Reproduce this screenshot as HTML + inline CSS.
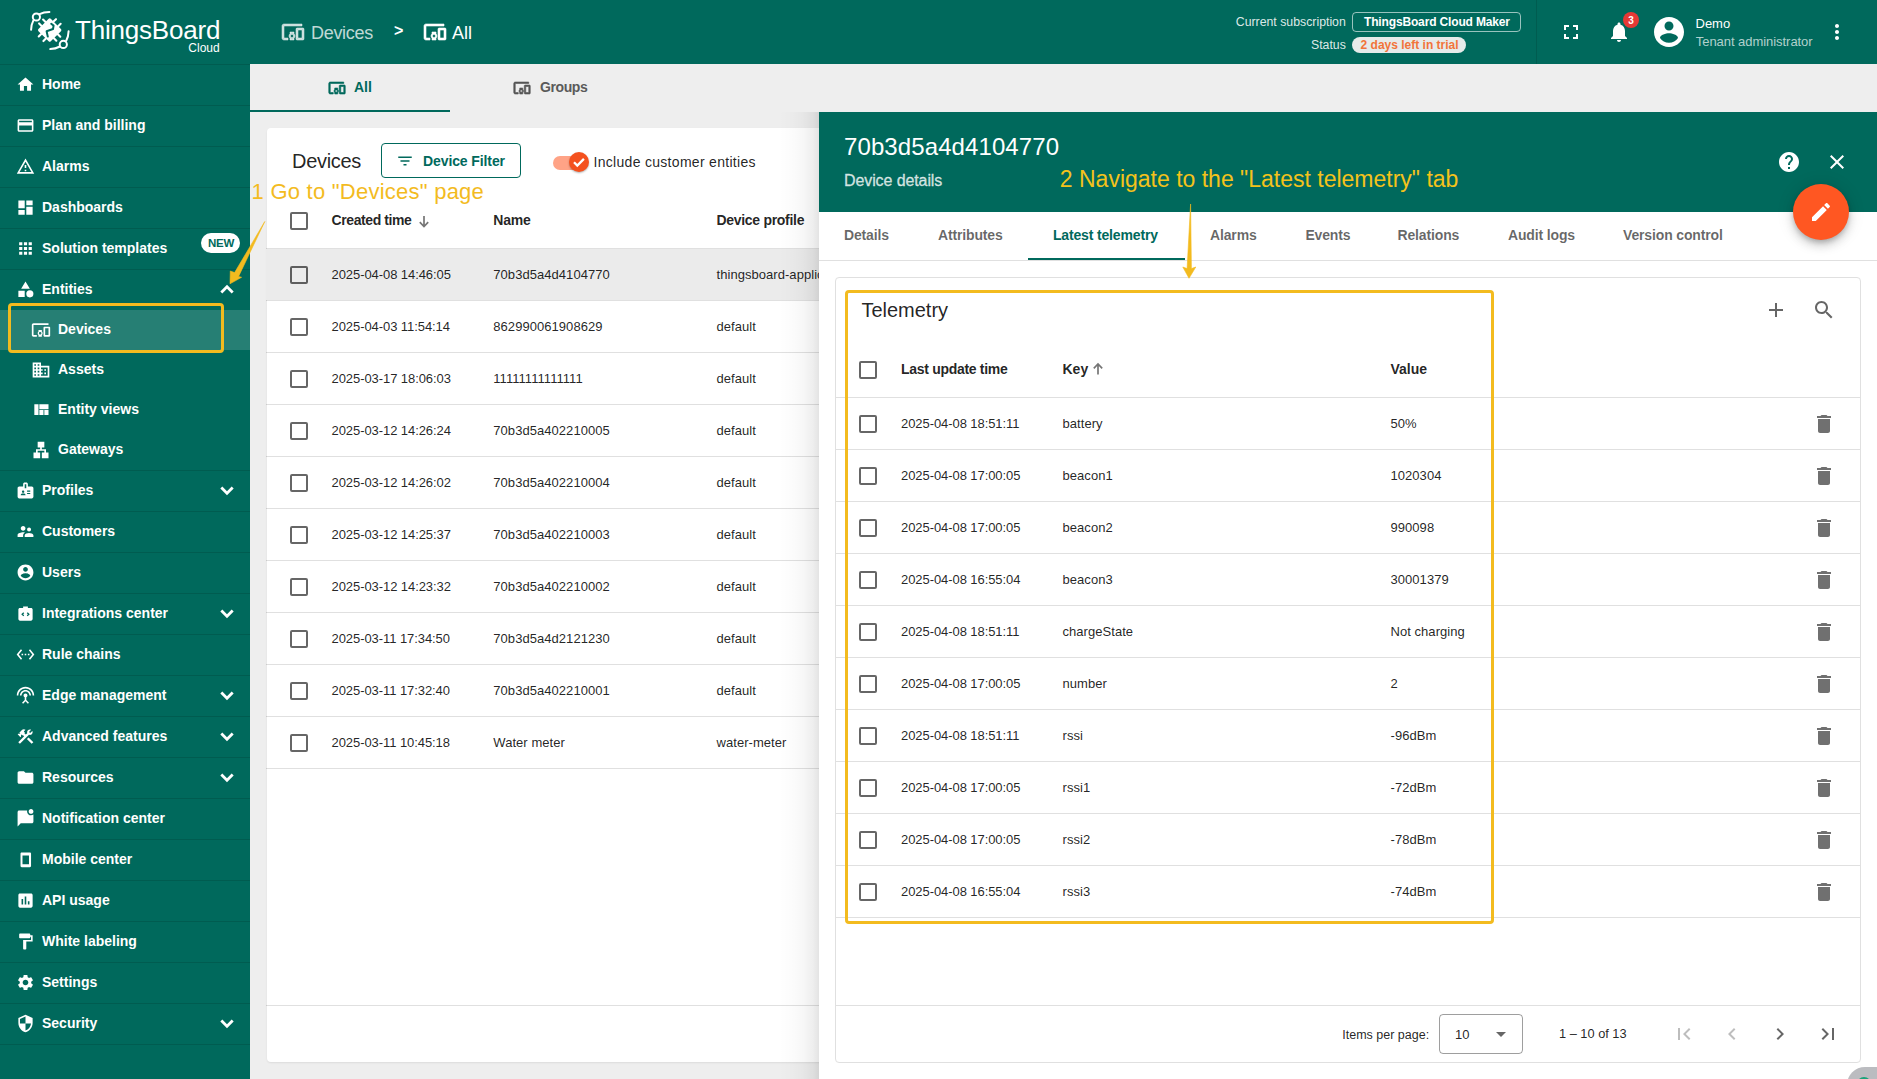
<!DOCTYPE html>
<html><head><meta charset="utf-8"><style>
html,body{margin:0;padding:0;width:1877px;height:1079px;overflow:hidden;background:#eee;font-family:"Liberation Sans",sans-serif}
.t{position:absolute;white-space:nowrap;line-height:1}
.b{position:absolute}
.i{position:absolute;overflow:visible}
</style></head><body>
<div class="b" style="left:0px;top:0px;width:1877px;height:64px;background:#00695c"></div>
<svg class="i" style="left:26px;top:8px;width:48px;height:46px" viewBox="0 0 48 46">
<g fill="none" stroke="#fff" stroke-width="2" stroke-linecap="round">
<circle cx="10.4" cy="9" r="3.6"/><circle cx="37.3" cy="36.4" r="3.6"/>
<path d="M13.6 6.2 C16.5 4.6 20 4 23.4 4"/><path d="M7.4 12.4 C5.8 15.5 5.2 18.5 5.1 21.7"/>
<path d="M40.2 32.8 C41.8 29.8 42.5 26.5 42.6 23.2"/><path d="M33.9 38.5 C30.8 40.2 27.5 41 24.3 41.1"/>
<g transform="rotate(45 23.7 22.1)">
<rect x="15" y="13.4" width="17.4" height="17.4" rx="1.5" fill="#fff" stroke="none"/>
<path d="M20.4 13.4V9.9M27 13.4V9.9M32.4 19.3H35.9M32.4 24.9H35.9M27 30.8V34.3M20.4 30.8V34.3M15 19.3H11.5M15 24.9H11.5" stroke-width="2.1"/>
</g>
</g>
<path d="M25.2 15.8 L27.6 17.6 L27 21 L20.6 23.2 L21.8 28.6" fill="none" stroke="#00695c" stroke-width="2" stroke-linejoin="round" stroke-linecap="round"/>
</svg>
<div class="t" style="left:75.0px;top:16.6px;font-size:26px;color:#fff;letter-spacing:-0.2px">ThingsBoard</div>
<div class="t" style="right:1657.3px;top:42.3px;font-size:12px;color:#fff;">Cloud</div>
<svg class="i" style="left:281px;top:20px;width:24px;height:24px;" viewBox="0 0 24 24"><path fill="rgba(255,255,255,0.75)" stroke="rgba(255,255,255,0.75)" stroke-width="0.6" d="M3 6h18V4H3c-1.1 0-2 .9-2 2v12c0 1.1.9 2 2 2h4v-2H3V6zm10 6H9v1.78c-.61.55-1 1.33-1 2.22s.39 1.67 1 2.22V20h4v-1.78c.61-.55 1-1.34 1-2.22s-.39-1.67-1-2.22V12zm-2 5.5c-.83 0-1.5-.67-1.5-1.5s.67-1.5 1.5-1.5 1.5.67 1.5 1.5-.67 1.5-1.5 1.5zM22 8h-6c-.5 0-1 .5-1 1v10c0 .5.5 1 1 1h6c.5 0 1-.5 1-1V9c0-.5-.5-1-1-1zm-1 10h-4v-8h4v8z"/></svg>
<div class="t" style="left:311.0px;top:23.5px;font-size:18px;color:rgba(255,255,255,0.75);letter-spacing:-0.3px">Devices</div>
<div class="t" style="left:394.0px;top:22.5px;font-size:16px;font-weight:700;color:#fff;">&gt;</div>
<svg class="i" style="left:423px;top:20px;width:24px;height:24px;" viewBox="0 0 24 24"><path fill="#fff" stroke="#fff" stroke-width="0.6" d="M3 6h18V4H3c-1.1 0-2 .9-2 2v12c0 1.1.9 2 2 2h4v-2H3V6zm10 6H9v1.78c-.61.55-1 1.33-1 2.22s.39 1.67 1 2.22V20h4v-1.78c.61-.55 1-1.34 1-2.22s-.39-1.67-1-2.22V12zm-2 5.5c-.83 0-1.5-.67-1.5-1.5s.67-1.5 1.5-1.5 1.5.67 1.5 1.5-.67 1.5-1.5 1.5zM22 8h-6c-.5 0-1 .5-1 1v10c0 .5.5 1 1 1h6c.5 0 1-.5 1-1V9c0-.5-.5-1-1-1zm-1 10h-4v-8h4v8z"/></svg>
<div class="t" style="left:452.0px;top:23.5px;font-size:18px;color:#fff;">All</div>
<div class="t" style="right:531.2px;top:15.9px;font-size:12.3px;color:rgba(255,255,255,0.87);">Current subscription</div>
<div class="b" style="left:1352px;top:12px;width:169px;height:20px;border:1px solid rgba(255,255,255,0.6);border-radius:4px;box-sizing:border-box"></div>
<div class="t" style="left:1364.0px;top:16.1px;font-size:12px;font-weight:700;color:#fff;letter-spacing:-0.15px">ThingsBoard Cloud Maker</div>
<div class="t" style="right:531.2px;top:38.6px;font-size:12.3px;color:rgba(255,255,255,0.87);">Status</div>
<div class="b" style="left:1352px;top:37px;width:114px;height:16px;background:#e6ebea;border-radius:8px"></div>
<div class="t" style="left:1360.6px;top:38.8px;font-size:12px;font-weight:700;color:#f2743a;">2 days left in trial</div>
<div class="b" style="left:1536px;top:0px;width:1px;height:64px;background:rgba(0,0,0,0.12)"></div>
<svg class="i" style="left:1559px;top:20px;width:24px;height:24px;" viewBox="0 0 24 24"><path fill="#fff" d="M7 14H5v5h5v-2H7v-3zm-2-4h2V7h3V5H5v5zm12 7h-3v2h5v-5h-2v3zM14 5v2h3v3h2V5h-5z"/></svg>
<svg class="i" style="left:1607px;top:20px;width:24px;height:24px;" viewBox="0 0 24 24"><path fill="#fff" d="M12 22c1.1 0 2-.9 2-2h-4c0 1.1.89 2 2 2zm6-6v-5c0-3.07-1.64-5.64-4.5-6.32V4c0-.83-.67-1.5-1.5-1.5s-1.5.67-1.5 1.5v.68C7.63 5.36 6 7.92 6 11v5l-2 2v1h16v-1l-2-2z"/></svg>
<div class="b" style="left:1623px;top:12px;width:16px;height:16px;background:#e53935;border-radius:50%"></div>
<div class="t" style="left:1631.0px;top:15.5px;font-size:10px;font-weight:700;color:#fff;width:16px;margin-left:-8px;text-align:center">3</div>
<svg class="i" style="left:1651px;top:14px;width:36px;height:36px;" viewBox="0 0 24 24"><path fill="#fff" d="M12 2C6.48 2 2 6.48 2 12s4.48 10 10 10 10-4.48 10-10S17.52 2 12 2zm0 3c1.66 0 3 1.34 3 3s-1.34 3-3 3-3-1.34-3-3 1.34-3 3-3zm0 14.2c-2.5 0-4.71-1.28-6-3.22.03-1.99 4-3.08 6-3.08 1.99 0 5.97 1.09 6 3.08-1.29 1.94-3.5 3.22-6 3.22z"/></svg>
<div class="t" style="left:1695.5px;top:16.6px;font-size:13px;color:#fff;">Demo</div>
<div class="t" style="left:1695.8px;top:35.0px;font-size:13px;color:rgba(255,255,255,0.7);letter-spacing:-0.05px">Tenant administrator</div>
<svg class="i" style="left:1825px;top:20px;width:24px;height:24px;" viewBox="0 0 24 24"><path fill="#fff" d="M12 8c1.1 0 2-.9 2-2s-.9-2-2-2-2 .9-2 2 .9 2 2 2zm0 2c-1.1 0-2 .9-2 2s.9 2 2 2 2-.9 2-2-.9-2-2-2zm0 6c-1.1 0-2 .9-2 2s.9 2 2 2 2-.9 2-2-.9-2-2-2z"/></svg>
<div class="b" style="left:0px;top:64px;width:250px;height:1015px;background:#00695c"></div>
<div class="b" style="left:0px;top:64px;width:250px;height:1px;background:rgba(0,0,0,0.12)"></div>
<svg class="i" style="left:15.7px;top:75.0px;width:19px;height:19px;" viewBox="0 0 24 24"><path fill="#fff" d="M10 20v-6h4v6h5v-8h3L12 3 2 12h3v8z"/></svg>
<div class="t" style="left:42.0px;top:77.0px;font-size:14px;font-weight:700;color:#fff;">Home</div>
<div class="b" style="left:0px;top:105px;width:250px;height:1px;background:rgba(0,0,0,0.12)"></div>
<svg class="i" style="left:15.7px;top:116.0px;width:19px;height:19px;" viewBox="0 0 24 24"><path fill="#fff" d="M20 4H4c-1.11 0-1.99.89-1.99 2L2 18c0 1.11.89 2 2 2h16c1.11 0 2-.89 2-2V6c0-1.11-.89-2-2-2zm0 14H4v-6h16v6zm0-10H4V6h16v2z"/></svg>
<div class="t" style="left:42.0px;top:118.0px;font-size:14px;font-weight:700;color:#fff;">Plan and billing</div>
<div class="b" style="left:0px;top:146px;width:250px;height:1px;background:rgba(0,0,0,0.12)"></div>
<svg class="i" style="left:15.7px;top:157.0px;width:19px;height:19px;" viewBox="0 0 24 24"><path fill="#fff" d="M12 5.99L19.53 19H4.47L12 5.99M12 2L1 21h22L12 2zm1 14h-2v2h2v-2zm0-6h-2v4h2v-4z"/></svg>
<div class="t" style="left:42.0px;top:159.0px;font-size:14px;font-weight:700;color:#fff;">Alarms</div>
<div class="b" style="left:0px;top:187px;width:250px;height:1px;background:rgba(0,0,0,0.12)"></div>
<svg class="i" style="left:15.7px;top:198.0px;width:19px;height:19px;" viewBox="0 0 24 24"><path fill="#fff" d="M3 13h8V3H3v10zm0 8h8v-6H3v6zm10 0h8V11h-8v10zm0-18v6h8V3h-8z"/></svg>
<div class="t" style="left:42.0px;top:200.0px;font-size:14px;font-weight:700;color:#fff;">Dashboards</div>
<div class="b" style="left:0px;top:228px;width:250px;height:1px;background:rgba(0,0,0,0.12)"></div>
<svg class="i" style="left:15.7px;top:239.0px;width:19px;height:19px;" viewBox="0 0 24 24"><path fill="#fff" d="M4 8h4V4H4v4zm6 12h4v-4h-4v4zm-6 0h4v-4H4v4zm0-6h4v-4H4v4zm6 0h4v-4h-4v4zm6-10v4h4V4h-4zm-6 4h4V4h-4v4zm6 6h4v-4h-4v4zm0 6h4v-4h-4v4z"/></svg>
<div class="t" style="left:42.0px;top:241.0px;font-size:14px;font-weight:700;color:#fff;">Solution templates</div>
<div class="b" style="left:201px;top:233px;width:39px;height:20px;background:#fff;border-radius:10px"></div>
<div class="t" style="left:208.0px;top:237.6px;font-size:11.5px;font-weight:700;color:#00695c;letter-spacing:-0.2px">NEW</div>
<div class="b" style="left:0px;top:269px;width:250px;height:1px;background:rgba(0,0,0,0.12)"></div>
<svg class="i" style="left:15.7px;top:280.0px;width:19px;height:19px;" viewBox="0 0 24 24"><path fill="#fff" d="M12 2l-5.5 9h11zM17.5 13a4.5 4.5 0 1 0 0 9a4.5 4.5 0 1 0 0-9zM3 13.5h8v8H3z"/></svg>
<div class="t" style="left:42.0px;top:282.0px;font-size:14px;font-weight:700;color:#fff;">Entities</div>
<svg class="i" style="left:215px;top:277.5px;width:24px;height:24px" viewBox="0 0 24 24"><path d="M7.3 13.4L12 8.7l4.7 4.7" fill="none" stroke="#fff" stroke-width="2.8" stroke-linecap="square"/></svg>
<div class="b" style="left:0px;top:310px;width:250px;height:40px;background:rgba(255,255,255,0.15)"></div>
<svg class="i" style="left:31px;top:320.0px;width:20px;height:20px;" viewBox="0 0 24 24"><path fill="#fff" d="M3 6h18V4H3c-1.1 0-2 .9-2 2v12c0 1.1.9 2 2 2h4v-2H3V6zm10 6H9v1.78c-.61.55-1 1.33-1 2.22s.39 1.67 1 2.22V20h4v-1.78c.61-.55 1-1.34 1-2.22s-.39-1.67-1-2.22V12zm-2 5.5c-.83 0-1.5-.67-1.5-1.5s.67-1.5 1.5-1.5 1.5.67 1.5 1.5-.67 1.5-1.5 1.5zM22 8h-6c-.5 0-1 .5-1 1v10c0 .5.5 1 1 1h6c.5 0 1-.5 1-1V9c0-.5-.5-1-1-1zm-1 10h-4v-8h4v8z"/></svg>
<div class="t" style="left:58.0px;top:321.7px;font-size:14px;font-weight:700;color:#fff;">Devices</div>
<svg class="i" style="left:31px;top:360.0px;width:20px;height:20px;" viewBox="0 0 24 24"><path fill="#fff" d="M12 7V3H2v18h20V7H12zM6 19H4v-2h2v2zm0-4H4v-2h2v2zm0-4H4V9h2v2zm0-4H4V5h2v2zm4 12H8v-2h2v2zm0-4H8v-2h2v2zm0-4H8V9h2v2zm0-4H8V5h2v2zm10 12h-8v-2h2v-2h-2v-2h2v-2h-2V9h8v10zm-2-8h-2v2h2v-2zm0 4h-2v2h2v-2z"/></svg>
<div class="t" style="left:58.0px;top:361.7px;font-size:14px;font-weight:700;color:#fff;">Assets</div>
<svg class="i" style="left:31px;top:400.0px;width:20px;height:20px;" viewBox="0 0 24 24"><path fill="#fff" d="M10 18h5v-6h-5v6zm-6 0h5V5H4v13zm12 0h5v-6h-5v6zM10 5v6h11V5H10z"/></svg>
<div class="t" style="left:58.0px;top:401.7px;font-size:14px;font-weight:700;color:#fff;">Entity views</div>
<svg class="i" style="left:31px;top:440.0px;width:20px;height:20px;" viewBox="0 0 24 24"><path fill="#fff" d="M13 22h8v-7h-3v-4h-5V9h3V2H8v7h3v2H6v4H3v7h8v-7H8v-2h8v2h-3z"/></svg>
<div class="t" style="left:58.0px;top:441.7px;font-size:14px;font-weight:700;color:#fff;">Gateways</div>
<div class="b" style="left:0px;top:470px;width:250px;height:1px;background:rgba(0,0,0,0.12)"></div>
<svg class="i" style="left:15.7px;top:481.0px;width:19px;height:19px;" viewBox="0 0 24 24"><path fill="#fff" d="M20 7h-5V4c0-1.1-.9-2-2-2h-2c-1.1 0-2 .9-2 2v3H4c-1.1 0-2 .9-2 2v11c0 1.1.9 2 2 2h16c1.1 0 2-.9 2-2V9c0-1.1-.9-2-2-2zM9 12c.83 0 1.5.67 1.5 1.5S9.83 15 9 15s-1.5-.67-1.5-1.5S8.17 12 9 12zm3 6H6v-.43c0-.6.36-1.15.92-1.39.64-.28 1.34-.43 2.08-.43s1.44.15 2.08.43c.55.24.92.78.92 1.39V18zm1-9h-2V4h2v5zm5 7.5h-4V15h4v1.5zm0-3h-4V12h4v1.5z"/></svg>
<div class="t" style="left:42.0px;top:483.0px;font-size:14px;font-weight:700;color:#fff;">Profiles</div>
<svg class="i" style="left:215px;top:478.5px;width:24px;height:24px" viewBox="0 0 24 24"><path d="M7.3 9.6L12 14.3l4.7-4.7" fill="none" stroke="#fff" stroke-width="2.8" stroke-linecap="square"/></svg>
<div class="b" style="left:0px;top:511px;width:250px;height:1px;background:rgba(0,0,0,0.12)"></div>
<svg class="i" style="left:15.7px;top:522.0px;width:19px;height:19px;" viewBox="0 0 24 24"><path fill="#fff" d="M16.5 12c1.38 0 2.49-1.12 2.49-2.5S17.88 7 16.5 7C15.12 7 14 8.12 14 9.5s1.12 2.5 2.5 2.5zM9 11c1.66 0 2.99-1.34 2.99-3S10.66 5 9 5C7.34 5 6 6.34 6 8s1.34 3 3 3zm7.5 3c-1.83 0-5.5.92-5.5 2.75V19h11v-2.25c0-1.83-3.67-2.75-5.5-2.75zM9 13c-2.330 0-7 1.17-7 3.5V19h7v-2.25c0-.85.33-2.34 2.37-3.47C10.5 13.1 9.66 13 9 13z"/></svg>
<div class="t" style="left:42.0px;top:524.0px;font-size:14px;font-weight:700;color:#fff;">Customers</div>
<div class="b" style="left:0px;top:552px;width:250px;height:1px;background:rgba(0,0,0,0.12)"></div>
<svg class="i" style="left:15.7px;top:563.0px;width:19px;height:19px;" viewBox="0 0 24 24"><path fill="#fff" d="M12 2C6.48 2 2 6.48 2 12s4.48 10 10 10 10-4.48 10-10S17.52 2 12 2zm0 3c1.66 0 3 1.34 3 3s-1.34 3-3 3-3-1.34-3-3 1.34-3 3-3zm0 14.2c-2.5 0-4.71-1.28-6-3.22.03-1.99 4-3.08 6-3.08 1.99 0 5.97 1.09 6 3.08-1.29 1.94-3.5 3.22-6 3.22z"/></svg>
<div class="t" style="left:42.0px;top:565.0px;font-size:14px;font-weight:700;color:#fff;">Users</div>
<div class="b" style="left:0px;top:593px;width:250px;height:1px;background:rgba(0,0,0,0.12)"></div>
<svg class="i" style="left:15.7px;top:604.0px;width:19px;height:19px;" viewBox="0 0 24 24"><path fill="#fff" d="M9 3h6v2h4c1.1 0 2 .9 2 2v12c0 1.1-.9 2-2 2H5c-1.1 0-2-.9-2-2V7c0-1.1.9-2 2-2h4V3zm1.4 8.6L9.2 10.4 6.6 13l2.6 2.6 1.2-1.2L9 13zm3.2 0L15 13l-1.4 1.4 1.2 1.2 2.6-2.6-2.6-2.6z"/></svg>
<div class="t" style="left:42.0px;top:606.0px;font-size:14px;font-weight:700;color:#fff;">Integrations center</div>
<svg class="i" style="left:215px;top:601.5px;width:24px;height:24px" viewBox="0 0 24 24"><path d="M7.3 9.6L12 14.3l4.7-4.7" fill="none" stroke="#fff" stroke-width="2.8" stroke-linecap="square"/></svg>
<div class="b" style="left:0px;top:634px;width:250px;height:1px;background:rgba(0,0,0,0.12)"></div>
<svg class="i" style="left:15.7px;top:645.0px;width:19px;height:19px;" viewBox="0 0 24 24"><path fill="#fff" d="M7.77 6.76L6.23 5.48.82 12l5.41 6.52 1.54-1.28L3.42 12l4.35-5.24zM7 13h2v-2H7v2zm10-2h-2v2h2v-2zm-6 2h2v-2h-2v2zm6.77-7.52l-1.54 1.28L20.58 12l-4.35 5.24 1.54 1.28L23.18 12l-5.41-6.52z"/></svg>
<div class="t" style="left:42.0px;top:647.0px;font-size:14px;font-weight:700;color:#fff;">Rule chains</div>
<div class="b" style="left:0px;top:675px;width:250px;height:1px;background:rgba(0,0,0,0.12)"></div>
<svg class="i" style="left:15.7px;top:686.0px;width:19px;height:19px;" viewBox="0 0 24 24"><path fill="#fff" d="M12 5c-3.87 0-7 3.13-7 7h2c0-2.76 2.24-5 5-5s5 2.24 5 5h2c0-3.87-3.13-7-7-7zm1 9.29c.88-.39 1.5-1.26 1.5-2.29 0-1.38-1.12-2.5-2.5-2.5S9.5 10.62 9.5 12c0 1.02.62 1.9 1.5 2.29v3.3L7.59 21 9 22.41l3-3 3 3L16.41 21 13 17.59v-3.3zM12 1C5.93 1 1 5.93 1 12h2c0-4.97 4.03-9 9-9s9 4.03 9 9h2c0-6.07-4.93-11-11-11z"/></svg>
<div class="t" style="left:42.0px;top:688.0px;font-size:14px;font-weight:700;color:#fff;">Edge management</div>
<svg class="i" style="left:215px;top:683.5px;width:24px;height:24px" viewBox="0 0 24 24"><path d="M7.3 9.6L12 14.3l4.7-4.7" fill="none" stroke="#fff" stroke-width="2.8" stroke-linecap="square"/></svg>
<div class="b" style="left:0px;top:716px;width:250px;height:1px;background:rgba(0,0,0,0.12)"></div>
<svg class="i" style="left:15.7px;top:727.0px;width:19px;height:19px;" viewBox="0 0 24 24"><path fill="#fff" d="M13.78 15.3L19.78 21.3L21.89 19.14L15.89 13.14L13.78 15.3M17.5 10.1C17.11 10.1 16.69 10.05 16.36 9.91L4.97 21.25L2.86 19.14L10.27 11.74L8.5 9.96L7.78 10.66L6.33 9.25V12.11L5.63 12.81L2.11 9.25L2.81 8.55H5.62L4.22 7.14L7.78 3.58C8.95 2.41 10.83 2.41 12 3.58L9.89 5.74L11.3 7.14L10.59 7.85L12.38 9.63L14.2 7.75C14.06 7.42 14 7 14 6.63C14 4.66 15.56 3.11 17.5 3.11C18.09 3.11 18.61 3.25 19.08 3.53L16.41 6.2L17.91 7.7L20.58 5.03C20.86 5.5 21 6 21 6.63C21 8.55 19.45 10.1 17.5 10.1Z"/></svg>
<div class="t" style="left:42.0px;top:729.0px;font-size:14px;font-weight:700;color:#fff;">Advanced features</div>
<svg class="i" style="left:215px;top:724.5px;width:24px;height:24px" viewBox="0 0 24 24"><path d="M7.3 9.6L12 14.3l4.7-4.7" fill="none" stroke="#fff" stroke-width="2.8" stroke-linecap="square"/></svg>
<div class="b" style="left:0px;top:757px;width:250px;height:1px;background:rgba(0,0,0,0.12)"></div>
<svg class="i" style="left:15.7px;top:768.0px;width:19px;height:19px;" viewBox="0 0 24 24"><path fill="#fff" d="M10 4H4c-1.1 0-1.99.9-1.99 2L2 18c0 1.1.9 2 2 2h16c1.1 0 2-.9 2-2V8c0-1.1-.9-2-2-2h-8l-2-2z"/></svg>
<div class="t" style="left:42.0px;top:770.0px;font-size:14px;font-weight:700;color:#fff;">Resources</div>
<svg class="i" style="left:215px;top:765.5px;width:24px;height:24px" viewBox="0 0 24 24"><path d="M7.3 9.6L12 14.3l4.7-4.7" fill="none" stroke="#fff" stroke-width="2.8" stroke-linecap="square"/></svg>
<div class="b" style="left:0px;top:798px;width:250px;height:1px;background:rgba(0,0,0,0.12)"></div>
<svg class="i" style="left:15.7px;top:809.0px;width:19px;height:19px;" viewBox="0 0 24 24"><path fill="#fff" d="M22 6.98V16c0 1.1-.9 2-2 2H6l-4 4V4c0-1.1.9-2 2-2h10.1c-.06.32-.1.66-.1 1 0 2.76 2.24 5 5 5 1.13 0 2.16-.39 3-1.02zM16 3c0 1.66 1.34 3 3 3s3-1.34 3-3-1.34-3-3-3-3 1.34-3 3z"/></svg>
<div class="t" style="left:42.0px;top:811.0px;font-size:14px;font-weight:700;color:#fff;">Notification center</div>
<div class="b" style="left:0px;top:839px;width:250px;height:1px;background:rgba(0,0,0,0.12)"></div>
<svg class="i" style="left:15.7px;top:850.0px;width:19px;height:19px;" viewBox="0 0 24 24"><path fill="#fff" d="M7.2 3h10.3c.8 0 1.5.7 1.5 1.5v15.8c0 .8-.7 1.5-1.5 1.5H7.2c-.8 0-1.5-.7-1.5-1.5V4.5c0-.8.7-1.5 1.5-1.5zM8.2 6.8v11.3h8.2V6.8z"/></svg>
<div class="t" style="left:42.0px;top:852.0px;font-size:14px;font-weight:700;color:#fff;">Mobile center</div>
<div class="b" style="left:0px;top:880px;width:250px;height:1px;background:rgba(0,0,0,0.12)"></div>
<svg class="i" style="left:15.7px;top:891.0px;width:19px;height:19px;" viewBox="0 0 24 24"><path fill="#fff" d="M19 3H5c-1.1 0-2 .9-2 2v14c0 1.1.9 2 2 2h14c1.1 0 2-.9 2-2V5c0-1.1-.9-2-2-2zM9 17H7v-7h2v7zm4 0h-2V7h2v10zm4 0h-2v-4h2v4z"/></svg>
<div class="t" style="left:42.0px;top:893.0px;font-size:14px;font-weight:700;color:#fff;">API usage</div>
<div class="b" style="left:0px;top:921px;width:250px;height:1px;background:rgba(0,0,0,0.12)"></div>
<svg class="i" style="left:15.7px;top:932.0px;width:19px;height:19px;" viewBox="0 0 24 24"><path fill="#fff" d="M18 4V3c0-.55-.45-1-1-1H5c-.55 0-1 .45-1 1v4c0 .55.45 1 1 1h12c.55 0 1-.45 1-1V6h1v4H9v11c0 .55.45 1 1 1h2c.55 0 1-.45 1-1v-9h8V4h-3z"/></svg>
<div class="t" style="left:42.0px;top:934.0px;font-size:14px;font-weight:700;color:#fff;">White labeling</div>
<div class="b" style="left:0px;top:962px;width:250px;height:1px;background:rgba(0,0,0,0.12)"></div>
<svg class="i" style="left:15.7px;top:973.0px;width:19px;height:19px;" viewBox="0 0 24 24"><path fill="#fff" d="M19.14 12.94c.04-.3.06-.61.06-.94 0-.32-.02-.64-.07-.94l2.03-1.58c.18-.14.23-.41.12-.61l-1.92-3.32c-.12-.22-.37-.29-.59-.22l-2.39.96c-.5-.38-1.030-.7-1.62-.94l-.36-2.54c-.04-.24-.24-.41-.48-.41h-3.84c-.24 0-.43.17-.47.41l-.36 2.54c-.59.24-1.13.57-1.62.94l-2.39-.96c-.22-.08-.47 0-.59.22L2.74 8.87c-.12.21-.08.47.12.61l2.03 1.58c-.05.3-.09.63-.09.94s.02.64.07.94l-2.03 1.58c-.18.14-.23.41-.12.61l1.92 3.32c.12.22.37.29.59.22l2.39-.96c.5.38 1.03.7 1.62.94l.36 2.54c.05.24.24.41.48.41h3.84c.24 0 .44-.17.47-.41l.36-2.54c.59-.24 1.13-.56 1.62-.94l2.39.96c.22.08.47 0 .59-.22l1.92-3.32c.12-.22.07-.47-.12-.61l-2.01-1.58zM12 15.6c-1.98 0-3.6-1.62-3.6-3.6s1.62-3.6 3.6-3.6 3.6 1.62 3.6 3.6-1.62 3.6-3.6 3.6z"/></svg>
<div class="t" style="left:42.0px;top:975.0px;font-size:14px;font-weight:700;color:#fff;">Settings</div>
<div class="b" style="left:0px;top:1003px;width:250px;height:1px;background:rgba(0,0,0,0.12)"></div>
<svg class="i" style="left:15.7px;top:1014.0px;width:19px;height:19px;" viewBox="0 0 24 24"><path fill="#fff" d="M12 1L3 5v6c0 5.55 3.84 10.74 9 12 5.16-1.26 9-6.45 9-12V5l-9-4zm0 10.99h7c-.53 4.12-3.28 7.79-7 8.94V12H5V6.3l7-3.11v8.8z"/></svg>
<div class="t" style="left:42.0px;top:1016.0px;font-size:14px;font-weight:700;color:#fff;">Security</div>
<svg class="i" style="left:215px;top:1011.5px;width:24px;height:24px" viewBox="0 0 24 24"><path d="M7.3 9.6L12 14.3l4.7-4.7" fill="none" stroke="#fff" stroke-width="2.8" stroke-linecap="square"/></svg>
<div class="b" style="left:0px;top:1044px;width:250px;height:1px;background:rgba(0,0,0,0.12)"></div>
<div class="b" style="left:250px;top:64px;width:1627px;height:1015px;background:#eeeeee"></div>
<svg class="i" style="left:328px;top:79px;width:18px;height:18px;" viewBox="0 0 24 24"><path fill="#00695c" stroke="#00695c" stroke-width="0.8" d="M3 6h18V4H3c-1.1 0-2 .9-2 2v12c0 1.1.9 2 2 2h4v-2H3V6zm10 6H9v1.78c-.61.55-1 1.33-1 2.22s.39 1.67 1 2.22V20h4v-1.78c.61-.55 1-1.34 1-2.22s-.39-1.67-1-2.22V12zm-2 5.5c-.83 0-1.5-.67-1.5-1.5s.67-1.5 1.5-1.5 1.5.67 1.5 1.5-.67 1.5-1.5 1.5zM22 8h-6c-.5 0-1 .5-1 1v10c0 .5.5 1 1 1h6c.5 0 1-.5 1-1V9c0-.5-.5-1-1-1zm-1 10h-4v-8h4v8z"/></svg>
<div class="t" style="left:354.0px;top:80.1px;font-size:14px;font-weight:700;color:#00695c;">All</div>
<svg class="i" style="left:513px;top:79px;width:18px;height:18px;" viewBox="0 0 24 24"><path fill="#555" stroke="#555" stroke-width="0.8" d="M3 6h18V4H3c-1.1 0-2 .9-2 2v12c0 1.1.9 2 2 2h4v-2H3V6zm10 6H9v1.78c-.61.55-1 1.33-1 2.22s.39 1.67 1 2.22V20h4v-1.78c.61-.55 1-1.34 1-2.22s-.39-1.67-1-2.22V12zm-2 5.5c-.83 0-1.5-.67-1.5-1.5s.67-1.5 1.5-1.5 1.5.67 1.5 1.5-.67 1.5-1.5 1.5zM22 8h-6c-.5 0-1 .5-1 1v10c0 .5.5 1 1 1h6c.5 0 1-.5 1-1V9c0-.5-.5-1-1-1zm-1 10h-4v-8h4v8z"/></svg>
<div class="t" style="left:540.0px;top:80.1px;font-size:14px;font-weight:700;color:#5a5a5a;letter-spacing:-0.4px">Groups</div>
<div class="b" style="left:250px;top:110px;width:200px;height:2px;background:#00695c"></div>
<div class="b" style="left:267px;top:128px;width:1594px;height:934px;background:#fff;border-radius:4px;box-shadow:0 1px 2px rgba(0,0,0,0.08)"></div>
<div class="t" style="left:292.0px;top:150.9px;font-size:20px;color:rgba(0,0,0,0.87);letter-spacing:-0.3px">Devices</div>
<div class="b" style="left:381px;top:143px;width:140px;height:35px;border:1px solid #00695c;border-radius:4px;box-sizing:border-box"></div>
<svg class="i" style="left:396.3px;top:151.5px;width:18px;height:18px;" viewBox="0 0 24 24"><path fill="#00695c" d="M10 18h4v-2h-4v2zM3 6v2h18V6H3zm3 7h12v-2H6v2z"/></svg>
<div class="t" style="left:423.0px;top:154.4px;font-size:14px;font-weight:700;color:#00695c;letter-spacing:-0.1px">Device Filter</div>
<div class="b" style="left:553px;top:156px;width:30px;height:14px;background:rgba(255,87,34,0.55);border-radius:7px"></div>
<div class="b" style="left:569px;top:152px;width:20px;height:20px;background:#f4511e;border-radius:50%;box-shadow:0 1px 2px rgba(0,0,0,0.3)"></div>
<svg class="i" style="left:569px;top:152px;width:20px;height:20px" viewBox="0 0 20 20"><path d="M5 10.2l3.3 3.3 6.6-6.6" fill="none" stroke="#fff" stroke-width="2.3"/></svg>
<div class="t" style="left:593.5px;top:154.6px;font-size:14px;color:rgba(0,0,0,0.87);letter-spacing:0.3px">Include customer entities</div>
<div class="b" style="left:290px;top:212px;width:18px;height:18px;border:2px solid rgba(0,0,0,0.6);border-radius:2px;box-sizing:border-box"></div>
<div class="t" style="left:331.5px;top:213.2px;font-size:14px;font-weight:700;color:rgba(0,0,0,0.87);letter-spacing:-0.4px">Created time</div>
<svg class="i" style="left:417px;top:214px;width:14px;height:14px" viewBox="0 0 14 14"><path d="M7 2v10.5M2.8 8.2L7 12.5l4.2-4.3" fill="none" stroke="rgba(0,0,0,0.54)" stroke-width="1.7"/></svg>
<div class="t" style="left:493.3px;top:213.2px;font-size:14px;font-weight:700;color:rgba(0,0,0,0.87);letter-spacing:-0.2px">Name</div>
<div class="t" style="left:716.5px;top:213.2px;font-size:14px;font-weight:700;color:rgba(0,0,0,0.87);letter-spacing:-0.3px">Device profile</div>
<div class="b" style="left:266px;top:248px;width:553px;height:1px;background:rgba(0,0,0,0.12)"></div>
<div class="b" style="left:266px;top:249px;width:553px;height:51px;background:#ebebeb"></div>
<div class="b" style="left:266px;top:300px;width:553px;height:1px;background:rgba(0,0,0,0.12)"></div>
<div class="b" style="left:290px;top:266px;width:18px;height:18px;border:2px solid rgba(0,0,0,0.6);border-radius:2px;box-sizing:border-box"></div>
<div class="t" style="left:331.5px;top:267.8px;font-size:13px;color:rgba(0,0,0,0.87);letter-spacing:-0.07px">2025-04-08 14:46:05</div>
<div class="t" style="left:493.3px;top:267.8px;font-size:13px;color:rgba(0,0,0,0.87);letter-spacing:0.05px">70b3d5a4d4104770</div>
<div class="t" style="left:716.5px;top:267.8px;font-size:13px;color:rgba(0,0,0,0.87);letter-spacing:0.05px">thingsboard-application</div>
<div class="b" style="left:266px;top:352px;width:553px;height:1px;background:rgba(0,0,0,0.12)"></div>
<div class="b" style="left:290px;top:318px;width:18px;height:18px;border:2px solid rgba(0,0,0,0.6);border-radius:2px;box-sizing:border-box"></div>
<div class="t" style="left:331.5px;top:319.8px;font-size:13px;color:rgba(0,0,0,0.87);letter-spacing:-0.07px">2025-04-03 11:54:14</div>
<div class="t" style="left:493.3px;top:319.8px;font-size:13px;color:rgba(0,0,0,0.87);letter-spacing:0.05px">862990061908629</div>
<div class="t" style="left:716.5px;top:319.8px;font-size:13px;color:rgba(0,0,0,0.87);letter-spacing:0.05px">default</div>
<div class="b" style="left:266px;top:404px;width:553px;height:1px;background:rgba(0,0,0,0.12)"></div>
<div class="b" style="left:290px;top:370px;width:18px;height:18px;border:2px solid rgba(0,0,0,0.6);border-radius:2px;box-sizing:border-box"></div>
<div class="t" style="left:331.5px;top:371.8px;font-size:13px;color:rgba(0,0,0,0.87);letter-spacing:-0.07px">2025-03-17 18:06:03</div>
<div class="t" style="left:493.3px;top:371.8px;font-size:13px;color:rgba(0,0,0,0.87);letter-spacing:0.05px">11111111111111</div>
<div class="t" style="left:716.5px;top:371.8px;font-size:13px;color:rgba(0,0,0,0.87);letter-spacing:0.05px">default</div>
<div class="b" style="left:266px;top:456px;width:553px;height:1px;background:rgba(0,0,0,0.12)"></div>
<div class="b" style="left:290px;top:422px;width:18px;height:18px;border:2px solid rgba(0,0,0,0.6);border-radius:2px;box-sizing:border-box"></div>
<div class="t" style="left:331.5px;top:423.8px;font-size:13px;color:rgba(0,0,0,0.87);letter-spacing:-0.07px">2025-03-12 14:26:24</div>
<div class="t" style="left:493.3px;top:423.8px;font-size:13px;color:rgba(0,0,0,0.87);letter-spacing:0.05px">70b3d5a402210005</div>
<div class="t" style="left:716.5px;top:423.8px;font-size:13px;color:rgba(0,0,0,0.87);letter-spacing:0.05px">default</div>
<div class="b" style="left:266px;top:508px;width:553px;height:1px;background:rgba(0,0,0,0.12)"></div>
<div class="b" style="left:290px;top:474px;width:18px;height:18px;border:2px solid rgba(0,0,0,0.6);border-radius:2px;box-sizing:border-box"></div>
<div class="t" style="left:331.5px;top:475.8px;font-size:13px;color:rgba(0,0,0,0.87);letter-spacing:-0.07px">2025-03-12 14:26:02</div>
<div class="t" style="left:493.3px;top:475.8px;font-size:13px;color:rgba(0,0,0,0.87);letter-spacing:0.05px">70b3d5a402210004</div>
<div class="t" style="left:716.5px;top:475.8px;font-size:13px;color:rgba(0,0,0,0.87);letter-spacing:0.05px">default</div>
<div class="b" style="left:266px;top:560px;width:553px;height:1px;background:rgba(0,0,0,0.12)"></div>
<div class="b" style="left:290px;top:526px;width:18px;height:18px;border:2px solid rgba(0,0,0,0.6);border-radius:2px;box-sizing:border-box"></div>
<div class="t" style="left:331.5px;top:527.8px;font-size:13px;color:rgba(0,0,0,0.87);letter-spacing:-0.07px">2025-03-12 14:25:37</div>
<div class="t" style="left:493.3px;top:527.8px;font-size:13px;color:rgba(0,0,0,0.87);letter-spacing:0.05px">70b3d5a402210003</div>
<div class="t" style="left:716.5px;top:527.8px;font-size:13px;color:rgba(0,0,0,0.87);letter-spacing:0.05px">default</div>
<div class="b" style="left:266px;top:612px;width:553px;height:1px;background:rgba(0,0,0,0.12)"></div>
<div class="b" style="left:290px;top:578px;width:18px;height:18px;border:2px solid rgba(0,0,0,0.6);border-radius:2px;box-sizing:border-box"></div>
<div class="t" style="left:331.5px;top:579.8px;font-size:13px;color:rgba(0,0,0,0.87);letter-spacing:-0.07px">2025-03-12 14:23:32</div>
<div class="t" style="left:493.3px;top:579.8px;font-size:13px;color:rgba(0,0,0,0.87);letter-spacing:0.05px">70b3d5a402210002</div>
<div class="t" style="left:716.5px;top:579.8px;font-size:13px;color:rgba(0,0,0,0.87);letter-spacing:0.05px">default</div>
<div class="b" style="left:266px;top:664px;width:553px;height:1px;background:rgba(0,0,0,0.12)"></div>
<div class="b" style="left:290px;top:630px;width:18px;height:18px;border:2px solid rgba(0,0,0,0.6);border-radius:2px;box-sizing:border-box"></div>
<div class="t" style="left:331.5px;top:631.8px;font-size:13px;color:rgba(0,0,0,0.87);letter-spacing:-0.07px">2025-03-11 17:34:50</div>
<div class="t" style="left:493.3px;top:631.8px;font-size:13px;color:rgba(0,0,0,0.87);letter-spacing:0.05px">70b3d5a4d2121230</div>
<div class="t" style="left:716.5px;top:631.8px;font-size:13px;color:rgba(0,0,0,0.87);letter-spacing:0.05px">default</div>
<div class="b" style="left:266px;top:716px;width:553px;height:1px;background:rgba(0,0,0,0.12)"></div>
<div class="b" style="left:290px;top:682px;width:18px;height:18px;border:2px solid rgba(0,0,0,0.6);border-radius:2px;box-sizing:border-box"></div>
<div class="t" style="left:331.5px;top:683.8px;font-size:13px;color:rgba(0,0,0,0.87);letter-spacing:-0.07px">2025-03-11 17:32:40</div>
<div class="t" style="left:493.3px;top:683.8px;font-size:13px;color:rgba(0,0,0,0.87);letter-spacing:0.05px">70b3d5a402210001</div>
<div class="t" style="left:716.5px;top:683.8px;font-size:13px;color:rgba(0,0,0,0.87);letter-spacing:0.05px">default</div>
<div class="b" style="left:266px;top:768px;width:553px;height:1px;background:rgba(0,0,0,0.12)"></div>
<div class="b" style="left:290px;top:734px;width:18px;height:18px;border:2px solid rgba(0,0,0,0.6);border-radius:2px;box-sizing:border-box"></div>
<div class="t" style="left:331.5px;top:735.8px;font-size:13px;color:rgba(0,0,0,0.87);letter-spacing:-0.07px">2025-03-11 10:45:18</div>
<div class="t" style="left:493.3px;top:735.8px;font-size:13px;color:rgba(0,0,0,0.87);letter-spacing:0.05px">Water meter</div>
<div class="t" style="left:716.5px;top:735.8px;font-size:13px;color:rgba(0,0,0,0.87);letter-spacing:0.05px">water-meter</div>
<div class="b" style="left:266px;top:1005px;width:553px;height:1px;background:rgba(0,0,0,0.12)"></div>
<div class="b" style="left:779px;top:112px;width:40px;height:967px;background:linear-gradient(to right,rgba(0,0,0,0),rgba(0,0,0,0.012) 30%,rgba(0,0,0,0.03) 60%,rgba(0,0,0,0.065) 85%,rgba(0,0,0,0.11))"></div>
<div class="b" style="left:819px;top:112px;width:1058px;height:967px;background:#fff"></div>
<div class="b" style="left:819px;top:112px;width:1058px;height:100px;background:#00695c"></div>
<div class="t" style="left:844.0px;top:134.8px;font-size:24px;color:#fff;letter-spacing:0.1px">70b3d5a4d4104770</div>
<div class="t" style="left:844.0px;top:172.8px;font-size:16px;color:rgba(255,255,255,0.78);letter-spacing:-0.1px;-webkit-text-stroke:0.3px rgba(255,255,255,0.78)">Device details</div>
<svg class="i" style="left:1777px;top:150px;width:24px;height:24px;" viewBox="0 0 24 24"><path fill="#fff" d="M12 2C6.48 2 2 6.48 2 12s4.48 10 10 10 10-4.48 10-10S17.52 2 12 2zm1 17h-2v-2h2v2zm2.07-7.75l-.9.92C13.45 12.9 13 13.5 13 15h-2v-.5c0-1.1.45-2.1 1.17-2.830l1.24-1.26c.37-.36.59-.86.59-1.41 0-1.1-.9-2-2-2s-2 .9-2 2H8c0-2.21 1.79-4 4-4s4 1.79 4 4c0 .88-.36 1.68-.93 2.25z"/></svg>
<svg class="i" style="left:1825px;top:150px;width:24px;height:24px;" viewBox="0 0 24 24"><path fill="#fff" d="M19 6.41L17.59 5 12 10.59 6.41 5 5 6.41 10.59 12 5 17.59 6.41 19 12 13.41 17.59 19 19 17.59 13.41 12z"/></svg>
<div class="b" style="left:819px;top:260px;width:1058px;height:1px;background:rgba(0,0,0,0.12)"></div>
<div class="t" style="left:844.0px;top:228.3px;font-size:14px;font-weight:700;color:rgba(0,0,0,0.6);letter-spacing:-0.15px">Details</div>
<div class="t" style="left:938.0px;top:228.3px;font-size:14px;font-weight:700;color:rgba(0,0,0,0.6);letter-spacing:-0.15px">Attributes</div>
<div class="t" style="left:1052.9px;top:228.3px;font-size:14px;font-weight:700;color:#00695c;letter-spacing:-0.15px">Latest telemetry</div>
<div class="t" style="left:1210.0px;top:228.3px;font-size:14px;font-weight:700;color:rgba(0,0,0,0.6);letter-spacing:-0.15px">Alarms</div>
<div class="t" style="left:1305.4px;top:228.3px;font-size:14px;font-weight:700;color:rgba(0,0,0,0.6);letter-spacing:-0.15px">Events</div>
<div class="t" style="left:1397.5px;top:228.3px;font-size:14px;font-weight:700;color:rgba(0,0,0,0.6);letter-spacing:-0.15px">Relations</div>
<div class="t" style="left:1508.0px;top:228.3px;font-size:14px;font-weight:700;color:rgba(0,0,0,0.6);letter-spacing:-0.15px">Audit logs</div>
<div class="t" style="left:1623.0px;top:228.3px;font-size:14px;font-weight:700;color:rgba(0,0,0,0.6);letter-spacing:-0.15px">Version control</div>
<div class="b" style="left:1028px;top:258px;width:157px;height:2px;background:#00695c"></div>
<div class="b" style="left:1793px;top:184px;width:56px;height:56px;background:#ff5722;border-radius:50%;box-shadow:0 3px 5px -1px rgba(0,0,0,.2),0 6px 10px 0 rgba(0,0,0,.14),0 1px 18px 0 rgba(0,0,0,.12)"></div>
<svg class="i" style="left:1809px;top:200px;width:24px;height:24px;" viewBox="0 0 24 24"><path fill="#fff" d="M3 17.25V21h3.75L17.81 9.94l-3.75-3.75L3 17.25zM20.71 7.04c.39-.39.39-1.02 0-1.41l-2.34-2.34c-.39-.39-1.02-.39-1.41 0l-1.83 1.83 3.75 3.75 1.83-1.83z"/></svg>
<div class="b" style="left:835px;top:277px;width:1026px;height:786px;border:1px solid #e0e0e0;border-radius:4px;box-sizing:border-box;background:#fff"></div>
<div class="t" style="left:861.4px;top:299.6px;font-size:20px;color:rgba(0,0,0,0.87);">Telemetry</div>
<svg class="i" style="left:1764px;top:298px;width:24px;height:24px;" viewBox="0 0 24 24"><path fill="rgba(0,0,0,0.6)" d="M19 13h-6v6h-2v-6H5v-2h6V5h2v6h6v2z"/></svg>
<svg class="i" style="left:1812px;top:298px;width:24px;height:24px;" viewBox="0 0 24 24"><path fill="rgba(0,0,0,0.6)" d="M15.5 14h-.79l-.28-.27C15.41 12.59 16 11.11 16 9.5 16 5.91 13.09 3 9.5 3S3 5.91 3 9.5 5.91 16 9.5 16c1.61 0 3.09-.59 4.23-1.57l.27.28v.79l5 4.99L20.49 19l-4.99-5zm-6 0C7.01 14 5 11.99 5 9.5S7.01 5 9.5 5 14 7.01 14 9.5 11.990 14 9.5 14z"/></svg>
<div class="b" style="left:859px;top:361px;width:18px;height:18px;border:2px solid rgba(0,0,0,0.6);border-radius:2px;box-sizing:border-box"></div>
<div class="t" style="left:901.0px;top:361.7px;font-size:14px;font-weight:700;color:rgba(0,0,0,0.87);letter-spacing:-0.3px">Last update time</div>
<div class="t" style="left:1062.5px;top:361.7px;font-size:14px;font-weight:700;color:rgba(0,0,0,0.87);">Key</div>
<svg class="i" style="left:1091px;top:362px;width:14px;height:14px" viewBox="0 0 14 14"><path d="M7 12.5V2M2.8 6.3L7 2l4.2 4.3" fill="none" stroke="rgba(0,0,0,0.54)" stroke-width="1.7"/></svg>
<div class="t" style="left:1390.5px;top:361.7px;font-size:14px;font-weight:700;color:rgba(0,0,0,0.87);">Value</div>
<div class="b" style="left:836px;top:397px;width:1024px;height:1px;background:rgba(0,0,0,0.12)"></div>
<div class="b" style="left:836px;top:449px;width:1024px;height:1px;background:rgba(0,0,0,0.12)"></div>
<div class="b" style="left:859px;top:415px;width:18px;height:18px;border:2px solid rgba(0,0,0,0.6);border-radius:2px;box-sizing:border-box"></div>
<div class="t" style="left:901.0px;top:416.8px;font-size:13px;color:rgba(0,0,0,0.87);letter-spacing:-0.07px">2025-04-08 18:51:11</div>
<div class="t" style="left:1062.5px;top:416.8px;font-size:13px;color:rgba(0,0,0,0.87);letter-spacing:0.05px">battery</div>
<div class="t" style="left:1390.5px;top:416.8px;font-size:13px;color:rgba(0,0,0,0.87);letter-spacing:0.05px">50%</div>
<svg class="i" style="left:1812px;top:412px;width:24px;height:24px;" viewBox="0 0 24 24"><path fill="rgba(0,0,0,0.56)" d="M6 19c0 1.1.9 2 2 2h8c1.1 0 2-.9 2-2V7H6v12zM19 4h-3.5l-1-1h-5l-1 1H5v2h14V4z"/></svg>
<div class="b" style="left:836px;top:501px;width:1024px;height:1px;background:rgba(0,0,0,0.12)"></div>
<div class="b" style="left:859px;top:467px;width:18px;height:18px;border:2px solid rgba(0,0,0,0.6);border-radius:2px;box-sizing:border-box"></div>
<div class="t" style="left:901.0px;top:468.8px;font-size:13px;color:rgba(0,0,0,0.87);letter-spacing:-0.07px">2025-04-08 17:00:05</div>
<div class="t" style="left:1062.5px;top:468.8px;font-size:13px;color:rgba(0,0,0,0.87);letter-spacing:0.05px">beacon1</div>
<div class="t" style="left:1390.5px;top:468.8px;font-size:13px;color:rgba(0,0,0,0.87);letter-spacing:0.05px">1020304</div>
<svg class="i" style="left:1812px;top:464px;width:24px;height:24px;" viewBox="0 0 24 24"><path fill="rgba(0,0,0,0.56)" d="M6 19c0 1.1.9 2 2 2h8c1.1 0 2-.9 2-2V7H6v12zM19 4h-3.5l-1-1h-5l-1 1H5v2h14V4z"/></svg>
<div class="b" style="left:836px;top:553px;width:1024px;height:1px;background:rgba(0,0,0,0.12)"></div>
<div class="b" style="left:859px;top:519px;width:18px;height:18px;border:2px solid rgba(0,0,0,0.6);border-radius:2px;box-sizing:border-box"></div>
<div class="t" style="left:901.0px;top:520.8px;font-size:13px;color:rgba(0,0,0,0.87);letter-spacing:-0.07px">2025-04-08 17:00:05</div>
<div class="t" style="left:1062.5px;top:520.8px;font-size:13px;color:rgba(0,0,0,0.87);letter-spacing:0.05px">beacon2</div>
<div class="t" style="left:1390.5px;top:520.8px;font-size:13px;color:rgba(0,0,0,0.87);letter-spacing:0.05px">990098</div>
<svg class="i" style="left:1812px;top:516px;width:24px;height:24px;" viewBox="0 0 24 24"><path fill="rgba(0,0,0,0.56)" d="M6 19c0 1.1.9 2 2 2h8c1.1 0 2-.9 2-2V7H6v12zM19 4h-3.5l-1-1h-5l-1 1H5v2h14V4z"/></svg>
<div class="b" style="left:836px;top:605px;width:1024px;height:1px;background:rgba(0,0,0,0.12)"></div>
<div class="b" style="left:859px;top:571px;width:18px;height:18px;border:2px solid rgba(0,0,0,0.6);border-radius:2px;box-sizing:border-box"></div>
<div class="t" style="left:901.0px;top:572.8px;font-size:13px;color:rgba(0,0,0,0.87);letter-spacing:-0.07px">2025-04-08 16:55:04</div>
<div class="t" style="left:1062.5px;top:572.8px;font-size:13px;color:rgba(0,0,0,0.87);letter-spacing:0.05px">beacon3</div>
<div class="t" style="left:1390.5px;top:572.8px;font-size:13px;color:rgba(0,0,0,0.87);letter-spacing:0.05px">30001379</div>
<svg class="i" style="left:1812px;top:568px;width:24px;height:24px;" viewBox="0 0 24 24"><path fill="rgba(0,0,0,0.56)" d="M6 19c0 1.1.9 2 2 2h8c1.1 0 2-.9 2-2V7H6v12zM19 4h-3.5l-1-1h-5l-1 1H5v2h14V4z"/></svg>
<div class="b" style="left:836px;top:657px;width:1024px;height:1px;background:rgba(0,0,0,0.12)"></div>
<div class="b" style="left:859px;top:623px;width:18px;height:18px;border:2px solid rgba(0,0,0,0.6);border-radius:2px;box-sizing:border-box"></div>
<div class="t" style="left:901.0px;top:624.8px;font-size:13px;color:rgba(0,0,0,0.87);letter-spacing:-0.07px">2025-04-08 18:51:11</div>
<div class="t" style="left:1062.5px;top:624.8px;font-size:13px;color:rgba(0,0,0,0.87);letter-spacing:0.05px">chargeState</div>
<div class="t" style="left:1390.5px;top:624.8px;font-size:13px;color:rgba(0,0,0,0.87);letter-spacing:0.05px">Not charging</div>
<svg class="i" style="left:1812px;top:620px;width:24px;height:24px;" viewBox="0 0 24 24"><path fill="rgba(0,0,0,0.56)" d="M6 19c0 1.1.9 2 2 2h8c1.1 0 2-.9 2-2V7H6v12zM19 4h-3.5l-1-1h-5l-1 1H5v2h14V4z"/></svg>
<div class="b" style="left:836px;top:709px;width:1024px;height:1px;background:rgba(0,0,0,0.12)"></div>
<div class="b" style="left:859px;top:675px;width:18px;height:18px;border:2px solid rgba(0,0,0,0.6);border-radius:2px;box-sizing:border-box"></div>
<div class="t" style="left:901.0px;top:676.8px;font-size:13px;color:rgba(0,0,0,0.87);letter-spacing:-0.07px">2025-04-08 17:00:05</div>
<div class="t" style="left:1062.5px;top:676.8px;font-size:13px;color:rgba(0,0,0,0.87);letter-spacing:0.05px">number</div>
<div class="t" style="left:1390.5px;top:676.8px;font-size:13px;color:rgba(0,0,0,0.87);letter-spacing:0.05px">2</div>
<svg class="i" style="left:1812px;top:672px;width:24px;height:24px;" viewBox="0 0 24 24"><path fill="rgba(0,0,0,0.56)" d="M6 19c0 1.1.9 2 2 2h8c1.1 0 2-.9 2-2V7H6v12zM19 4h-3.5l-1-1h-5l-1 1H5v2h14V4z"/></svg>
<div class="b" style="left:836px;top:761px;width:1024px;height:1px;background:rgba(0,0,0,0.12)"></div>
<div class="b" style="left:859px;top:727px;width:18px;height:18px;border:2px solid rgba(0,0,0,0.6);border-radius:2px;box-sizing:border-box"></div>
<div class="t" style="left:901.0px;top:728.8px;font-size:13px;color:rgba(0,0,0,0.87);letter-spacing:-0.07px">2025-04-08 18:51:11</div>
<div class="t" style="left:1062.5px;top:728.8px;font-size:13px;color:rgba(0,0,0,0.87);letter-spacing:0.05px">rssi</div>
<div class="t" style="left:1390.5px;top:728.8px;font-size:13px;color:rgba(0,0,0,0.87);letter-spacing:0.05px">-96dBm</div>
<svg class="i" style="left:1812px;top:724px;width:24px;height:24px;" viewBox="0 0 24 24"><path fill="rgba(0,0,0,0.56)" d="M6 19c0 1.1.9 2 2 2h8c1.1 0 2-.9 2-2V7H6v12zM19 4h-3.5l-1-1h-5l-1 1H5v2h14V4z"/></svg>
<div class="b" style="left:836px;top:813px;width:1024px;height:1px;background:rgba(0,0,0,0.12)"></div>
<div class="b" style="left:859px;top:779px;width:18px;height:18px;border:2px solid rgba(0,0,0,0.6);border-radius:2px;box-sizing:border-box"></div>
<div class="t" style="left:901.0px;top:780.8px;font-size:13px;color:rgba(0,0,0,0.87);letter-spacing:-0.07px">2025-04-08 17:00:05</div>
<div class="t" style="left:1062.5px;top:780.8px;font-size:13px;color:rgba(0,0,0,0.87);letter-spacing:0.05px">rssi1</div>
<div class="t" style="left:1390.5px;top:780.8px;font-size:13px;color:rgba(0,0,0,0.87);letter-spacing:0.05px">-72dBm</div>
<svg class="i" style="left:1812px;top:776px;width:24px;height:24px;" viewBox="0 0 24 24"><path fill="rgba(0,0,0,0.56)" d="M6 19c0 1.1.9 2 2 2h8c1.1 0 2-.9 2-2V7H6v12zM19 4h-3.5l-1-1h-5l-1 1H5v2h14V4z"/></svg>
<div class="b" style="left:836px;top:865px;width:1024px;height:1px;background:rgba(0,0,0,0.12)"></div>
<div class="b" style="left:859px;top:831px;width:18px;height:18px;border:2px solid rgba(0,0,0,0.6);border-radius:2px;box-sizing:border-box"></div>
<div class="t" style="left:901.0px;top:832.8px;font-size:13px;color:rgba(0,0,0,0.87);letter-spacing:-0.07px">2025-04-08 17:00:05</div>
<div class="t" style="left:1062.5px;top:832.8px;font-size:13px;color:rgba(0,0,0,0.87);letter-spacing:0.05px">rssi2</div>
<div class="t" style="left:1390.5px;top:832.8px;font-size:13px;color:rgba(0,0,0,0.87);letter-spacing:0.05px">-78dBm</div>
<svg class="i" style="left:1812px;top:828px;width:24px;height:24px;" viewBox="0 0 24 24"><path fill="rgba(0,0,0,0.56)" d="M6 19c0 1.1.9 2 2 2h8c1.1 0 2-.9 2-2V7H6v12zM19 4h-3.5l-1-1h-5l-1 1H5v2h14V4z"/></svg>
<div class="b" style="left:836px;top:917px;width:1024px;height:1px;background:rgba(0,0,0,0.12)"></div>
<div class="b" style="left:859px;top:883px;width:18px;height:18px;border:2px solid rgba(0,0,0,0.6);border-radius:2px;box-sizing:border-box"></div>
<div class="t" style="left:901.0px;top:884.8px;font-size:13px;color:rgba(0,0,0,0.87);letter-spacing:-0.07px">2025-04-08 16:55:04</div>
<div class="t" style="left:1062.5px;top:884.8px;font-size:13px;color:rgba(0,0,0,0.87);letter-spacing:0.05px">rssi3</div>
<div class="t" style="left:1390.5px;top:884.8px;font-size:13px;color:rgba(0,0,0,0.87);letter-spacing:0.05px">-74dBm</div>
<svg class="i" style="left:1812px;top:880px;width:24px;height:24px;" viewBox="0 0 24 24"><path fill="rgba(0,0,0,0.56)" d="M6 19c0 1.1.9 2 2 2h8c1.1 0 2-.9 2-2V7H6v12zM19 4h-3.5l-1-1h-5l-1 1H5v2h14V4z"/></svg>
<div class="b" style="left:836px;top:1005px;width:1024px;height:1px;background:rgba(0,0,0,0.12)"></div>
<div class="t" style="left:1342.3px;top:1028.9px;font-size:12.5px;color:rgba(0,0,0,0.87);">Items per page:</div>
<div class="b" style="left:1439px;top:1014px;width:84px;height:40px;border:1px solid rgba(0,0,0,0.38);border-radius:4px;box-sizing:border-box"></div>
<div class="t" style="left:1455.0px;top:1028.0px;font-size:13px;color:rgba(0,0,0,0.87);">10</div>
<svg class="i" style="left:1489px;top:1022px;width:24px;height:24px;" viewBox="0 0 24 24"><path fill="rgba(0,0,0,0.6)" d="M7 10l5 5 5-5z"/></svg>
<div class="t" style="left:1559.0px;top:1027.7px;font-size:12.8px;color:rgba(0,0,0,0.87);">1 – 10 of 13</div>
<svg class="i" style="left:1672px;top:1022px;width:24px;height:24px;" viewBox="0 0 24 24"><path fill="rgba(0,0,0,0.26)" d="M18.41 16.59L13.82 12l4.59-4.59L17 6l-6 6 6 6zM6 6h2v12H6z"/></svg>
<svg class="i" style="left:1720px;top:1022px;width:24px;height:24px;" viewBox="0 0 24 24"><path fill="rgba(0,0,0,0.26)" d="M15.41 7.41L14 6l-6 6 6 6 1.41-1.41L10.83 12z"/></svg>
<svg class="i" style="left:1768px;top:1022px;width:24px;height:24px;" viewBox="0 0 24 24"><path fill="rgba(0,0,0,0.6)" d="M10 6L8.59 7.41 13.17 12l-4.58 4.59L10 18l6-6z"/></svg>
<svg class="i" style="left:1816px;top:1022px;width:24px;height:24px;" viewBox="0 0 24 24"><path fill="rgba(0,0,0,0.6)" d="M5.59 7.41L10.18 12l-4.59 4.59L7 18l6-6-6-6zM16 6h2v12h-2z"/></svg>
<div class="b" style="left:1847px;top:1067px;width:60px;height:40px;background:#bbbcc0;border-radius:18px"></div>
<div class="b" style="left:1857px;top:1076.5px;width:14px;height:14px;background:#1aa37a;border-radius:50%"></div>
<div class="b" style="left:8px;top:303px;width:216px;height:50px;border:3px solid #f3bb1f;border-radius:4px;box-sizing:border-box"></div>
<div class="b" style="left:844.5px;top:289.5px;width:649.5px;height:634px;border:3.5px solid #f3bb1f;border-radius:4px;box-sizing:border-box"></div>
<div class="t" style="left:251.6px;top:181.0px;font-size:22px;color:#f3bb1f;letter-spacing:0.24px">1 Go to "Devices" page</div>
<div class="t" style="left:1059.8px;top:167.6px;font-size:23px;color:#f4c21b;letter-spacing:0px">2 Navigate to the "Latest telemetry" tab</div>
<svg class="i" style="left:0;top:0;width:1877px;height:1079px" viewBox="0 0 1877 1079">
<path d="M264.8 221.5 L238.6 276.4 L241.6 277.3 L230 283.8 L230.3 271 L234.6 272.6 Z" fill="#f3bb1f" stroke="#f3bb1f" stroke-width="0.6" stroke-linejoin="round"/>
<path d="M1190.6 204 L1191.4 268.6 L1195.8 267 L1189 278.3 L1182.8 267 L1187.1 268.6 Z" fill="#f3bb1f" stroke="#f3bb1f" stroke-width="0.6" stroke-linejoin="round"/>
</svg>
</body></html>
